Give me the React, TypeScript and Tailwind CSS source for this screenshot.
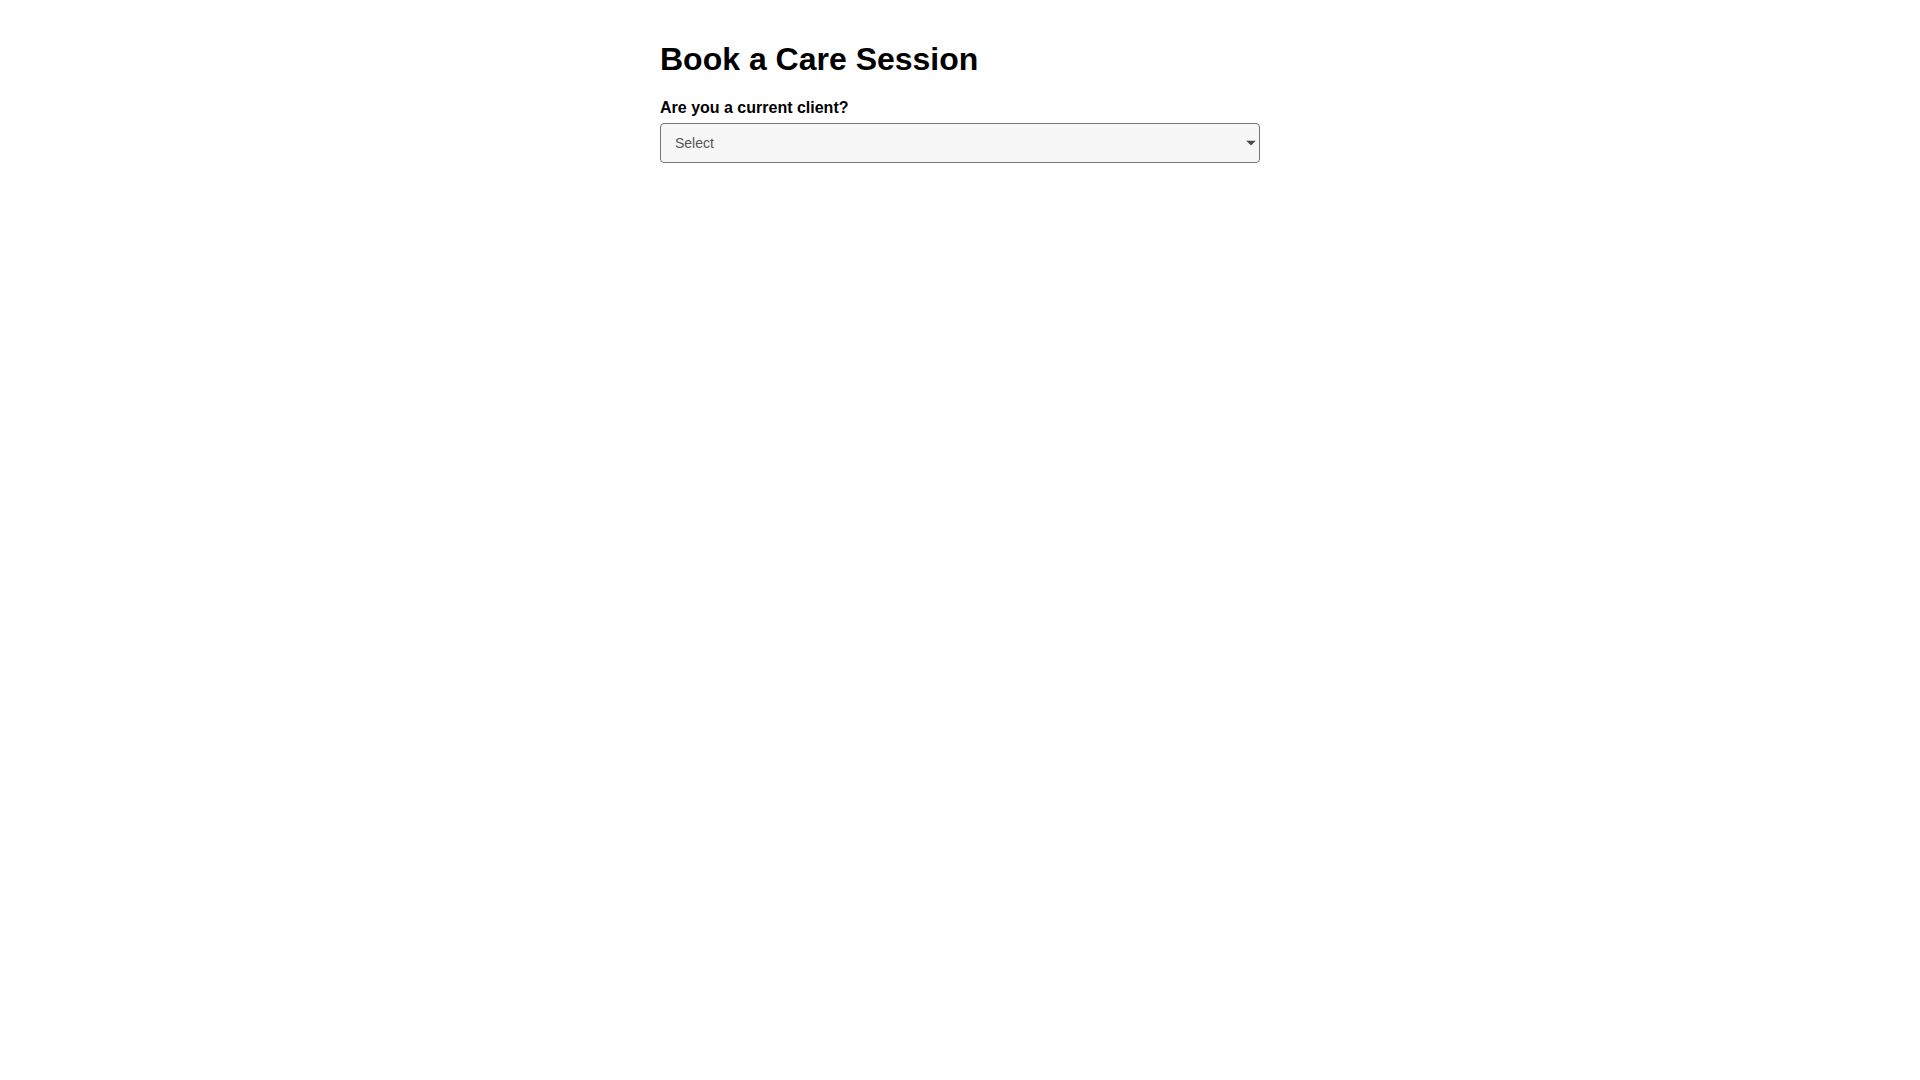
import React, { useState } from 'react';

const options = ['Yes', 'No'];

export default function App() {
  const [value, setValue] = useState('');

  return (
    <div className="min-h-screen bg-white font-['Liberation_Sans',Arial,sans-serif] text-black">
      <div className="mx-auto w-[600px] pt-[39px]">
        <h1 className="text-[32px] font-bold leading-[40px]">Book a Care Session</h1>

        <form className="mt-[17px] flex flex-col">
          <label htmlFor="client" className="text-base font-bold leading-6">
            Are you a current client?
          </label>
          <div className="relative mt-[3px]">
            <select
              id="client"
              value={value}
              onChange={(e) => setValue(e.target.value)}
              className="block h-10 w-full appearance-none rounded-[4px] border border-[#767676] bg-[#f7f7f7] pl-[14px] pr-8 text-sm text-[#555555] outline-none"
            >
              <option value="" disabled>
                Select
              </option>
              {options.map((o) => (
                <option key={o} value={o}>
                  {o}
                </option>
              ))}
            </select>
            <svg
              className="pointer-events-none absolute right-[4px] top-1/2 -translate-y-1/2"
              width="10"
              height="5"
              viewBox="0 0 10 5"
            >
              <path d="M0 0h10L5 5z" fill="#4a4a4a" />
            </svg>
          </div>
        </form>
      </div>
    </div>
  );
}
